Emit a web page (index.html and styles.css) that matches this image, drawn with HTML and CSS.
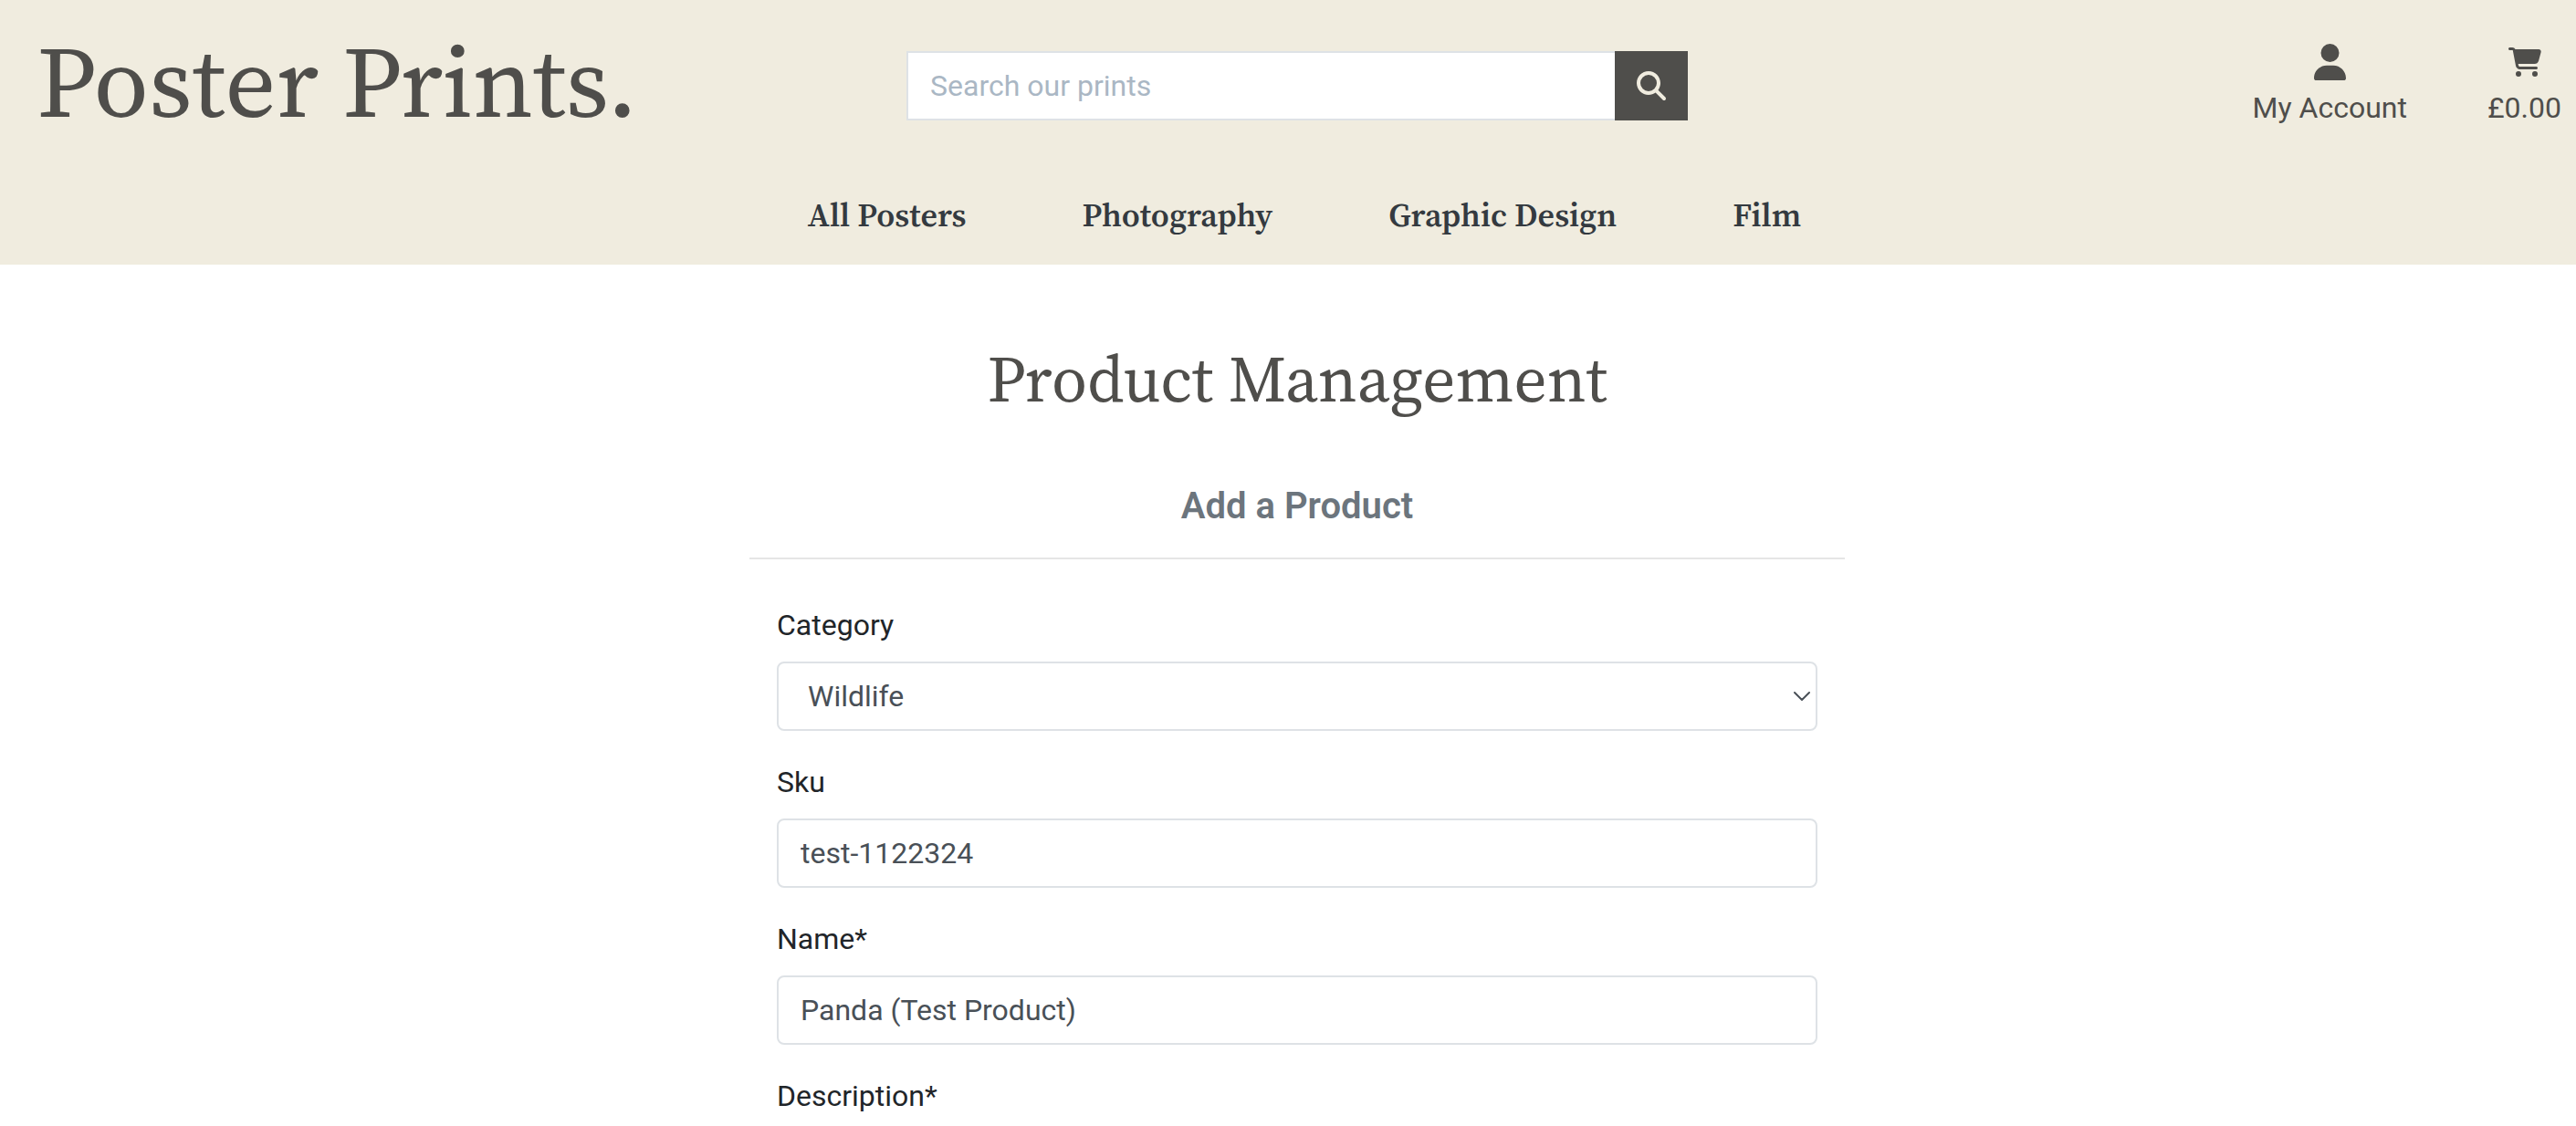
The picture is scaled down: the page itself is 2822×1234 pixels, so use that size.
FILE: index.html
```html
<!DOCTYPE html>
<html lang="en">
<head>
<meta charset="utf-8">
<meta name="viewport" content="width=device-width, initial-scale=1">
<title>Poster Prints.</title>
<link rel="stylesheet" href="styles.css">
</head>
<body>
<header class="site-header">
  <div class="top-bar">
    <a class="logo" href="#">Poster Prints.</a>
    <form class="search" role="search">
      <input class="search-input" type="search" name="q" placeholder="Search our prints" aria-label="Search our prints">
      <button class="search-button" type="submit" aria-label="Search">
        <svg class="icon-search" viewBox="0 0 512 512" aria-hidden="true"><path fill="currentColor" d="M416 208c0 45.9-14.9 88.3-40 122.7L502.6 457.4c12.5 12.5 12.5 32.8 0 45.3s-32.8 12.5-45.3 0L330.7 376c-34.4 25.2-76.8 40-122.7 40C93.1 416 0 322.9 0 208S93.1 0 208 0S416 93.1 416 208zM208 352a144 144 0 1 0 0-288 144 144 0 1 0 0 288z"/></svg>
      </button>
    </form>
    <div class="account">
      <a class="account-link" href="#">
        <span class="account-icon"><svg class="icon-user" viewBox="0 0 448 512" aria-hidden="true"><path fill="currentColor" d="M224 256A128 128 0 1 0 224 0a128 128 0 1 0 0 256zm-45.7 48C79.8 304 0 383.8 0 482.3C0 498.7 13.3 512 29.7 512H418.3c16.4 0 29.7-13.3 29.7-29.7C448 383.8 368.2 304 269.7 304H178.3z"/></svg></span>
        My Account
      </a>
      <a class="account-link" href="#">
        <span class="account-icon"><svg class="icon-cart" viewBox="0 0 576 512" aria-hidden="true"><path fill="currentColor" d="M0 24C0 10.7 10.7 0 24 0H69.5c22 0 41.5 12.8 50.6 32h411c26.3 0 45.5 25 38.6 50.4l-41 152.3c-8.5 31.4-37 53.3-69.5 53.3H170.7l5.4 28.5c2.2 11.3 12.1 19.5 23.6 19.5H488c13.3 0 24 10.7 24 24s-10.7 24-24 24H199.7c-34.6 0-64.3-24.6-70.7-58.5L77.4 54.5c-.7-3.8-4-6.5-7.9-6.5H24C10.7 48 0 37.3 0 24zM128 464a48 48 0 1 1 96 0 48 48 0 1 1 -96 0zm336-48a48 48 0 1 1 0 96 48 48 0 1 1 0-96z"/></svg></span>
        £0.00
      </a>
    </div>
  </div>
  <nav class="main-nav">
    <a href="#">All Posters</a>
    <a href="#">Photography</a>
    <a href="#">Graphic Design</a>
    <a href="#">Film</a>
  </nav>
</header>
<main class="content">
  <div class="panel">
    <h1 class="title">Product Management</h1>
    <h2 class="subtitle">Add a Product</h2>
    <hr class="rule">
    <form class="product-form">
      <div class="field">
        <label for="category">Category</label>
        <div class="select-wrap">
          <select class="control select" id="category"><option>Wildlife</option></select>
          <svg class="chevron" viewBox="0 0 20 12" aria-hidden="true"><path d="M2 2l8 8 8-8" fill="none" stroke="currentColor" stroke-width="2" stroke-linecap="round" stroke-linejoin="round"/></svg>
        </div>
      </div>
      <div class="field">
        <label for="sku">Sku</label>
        <input class="control" id="sku" type="text" value="test-1122324">
      </div>
      <div class="field">
        <label for="name">Name*</label>
        <input class="control" id="name" type="text" value="Panda (Test Product)" required>
      </div>
      <div class="field">
        <label for="description">Description*</label>
        <textarea class="control" id="description" rows="8" required></textarea>
      </div>
    </form>
  </div>
</main>
</body>
</html>
```
FILE: styles.css
```css
* {
  box-sizing: border-box;
}

body {
  margin: 0;
  height: 100vh;
  display: flex;
  flex-direction: column;
  background: #fff;
  color: #212529;
  font-family: Roboto, "Liberation Sans", sans-serif;
  font-size: 32px;
  line-height: 48px;
}

a {
  color: inherit;
  text-decoration: none;
}

/* Header */
.site-header {
  flex: none;
  background: #f0ecdf;
  color: #4f4e4b;
  padding: 24px 16px 24px 36px;
}

.top-bar {
  display: grid;
  grid-template-columns: 1fr minmax(auto, 856px) 1fr;
  align-items: center;
  height: 140px;
}

.logo {
  padding: 0 0 8px 4px;
  font-family: "Source Serif Pro", "Source Serif 4", "Noto Serif CJK SC", "Liberation Serif", serif;
  font-size: 110px;
  line-height: 132px;
  white-space: nowrap;
}

.search {
  display: flex;
  height: 76px;
}

.search-input {
  flex: 1;
  min-width: 0;
  border: 2px solid #dee2e6;
  border-right: 0;
  border-radius: 0;
  padding: 0 24px;
  background: #fff;
  color: #495057;
  font: inherit;
  appearance: none;
}

.search-input::placeholder {
  color: #aab7c4;
}

.search-button {
  display: flex;
  align-items: center;
  justify-content: center;
  width: 80px;
  border: 0;
  padding: 0;
  background: #4f4e4b;
  color: #f0ecdf;
}

.icon-search {
  width: 32px;
  height: 32px;
}

.account {
  display: flex;
  justify-content: flex-end;
  gap: 88px;
}

.account-link {
  display: flex;
  flex-direction: column;
  align-items: center;
  gap: 4px;
  white-space: nowrap;
}

.account-icon {
  display: flex;
  align-items: center;
  height: 44px;
}

.icon-user {
  width: 35px;
  height: 40px;
}

.icon-cart {
  width: 36px;
  height: 32px;
}

.main-nav {
  display: flex;
  justify-content: center;
  gap: 127px;
  padding: 48px 0 6px 16px;
  color: #343a40;
  font-family: "Source Serif Pro", "Source Serif 4", "Noto Serif CJK SC", "Liberation Serif", serif;
  font-size: 36px;
  font-weight: 600;
}

/* Page content */
.content {
  flex: 1;
  min-height: 0;
  overflow-y: auto;
  scrollbar-width: none;
  padding: 77px 0 48px 20px;
}

.panel {
  max-width: 1200px;
  margin: 0 auto;
}

.title {
  margin: 0;
  color: #4f4e4b;
  font-family: "Source Serif Pro", "Source Serif 4", "Noto Serif CJK SC", "Liberation Serif", serif;
  font-size: 71px;
  font-weight: 400;
  line-height: 96px;
  text-align: center;
}

.subtitle {
  margin: 68px 0 32px;
  color: #6c757d;
  font-size: 40px;
  font-weight: 600;
  line-height: 48px;
  text-align: center;
}

.rule {
  margin: 0 0 48px;
  border: 0;
  border-top: 2px solid #e5e5e5;
}

.product-form {
  padding: 0 30px;
}

.field {
  display: flex;
  flex-direction: column;
  gap: 16px;
  margin-bottom: 32px;
}

.control {
  width: 100%;
  min-height: 76px;
  border: 2px solid #dee2e6;
  border-radius: 8px;
  padding: 12px 24px;
  background: #fff;
  color: #495057;
  font: inherit;
}

.select-wrap {
  display: grid;
  align-items: center;
}

.select-wrap > * {
  grid-area: 1 / 1;
}

.select {
  padding-left: 32px;
  appearance: none;
}

.chevron {
  justify-self: end;
  width: 20px;
  height: 12px;
  margin-right: 7px;
  color: #495057;
  pointer-events: none;
}
```
